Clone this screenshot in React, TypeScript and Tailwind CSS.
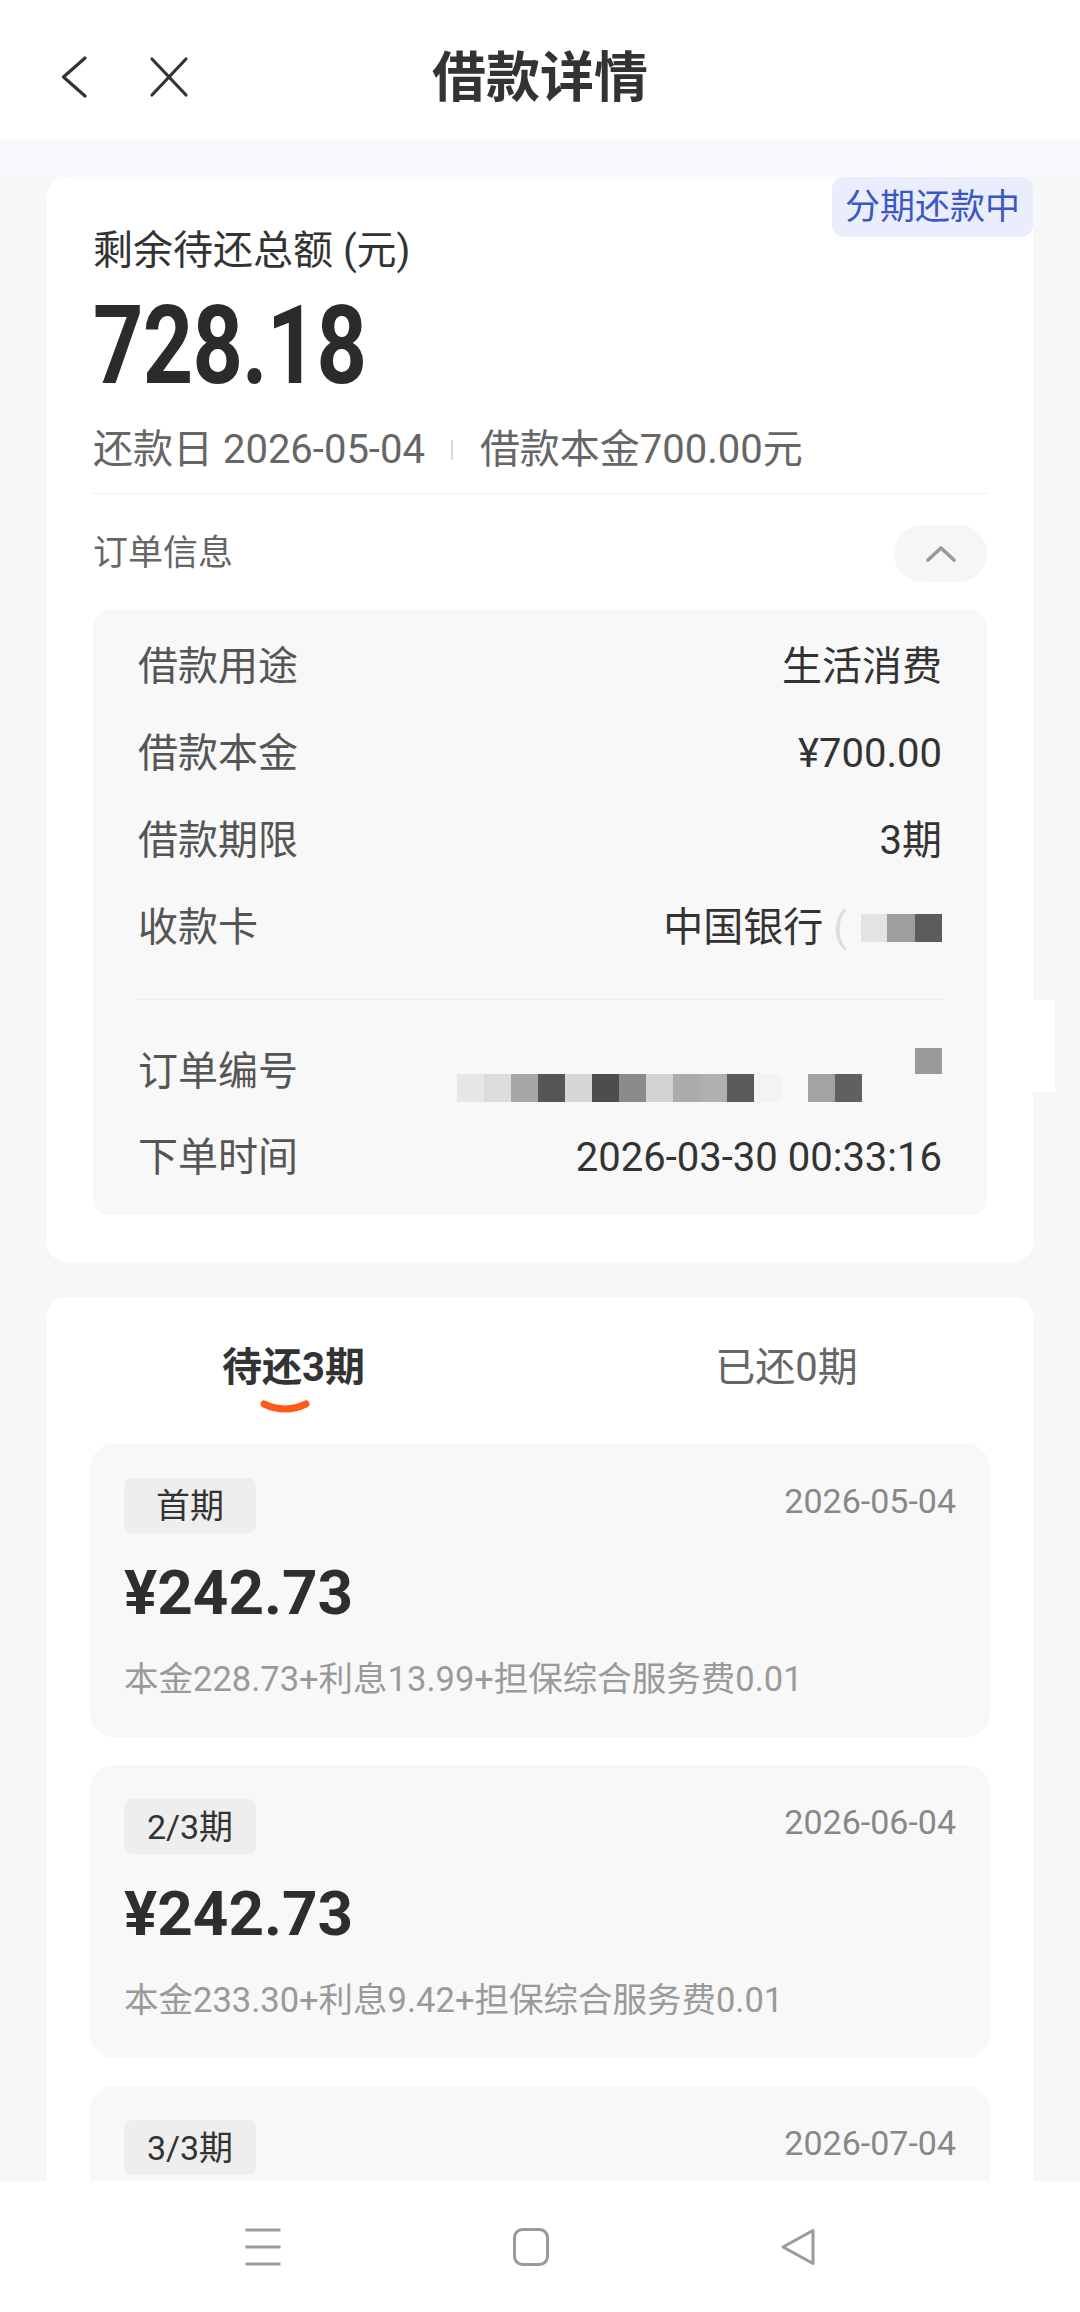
import React from "react";

const orderBlocks: { c: string }[] = [
  { c: "#e6e6e6" },
  { c: "#dcdcdc" },
  { c: "#a6a6a6" },
  { c: "#565656" },
  { c: "#d6d6d6" },
  { c: "#4d4d4d" },
  { c: "#8a8a8a" },
  { c: "#d2d2d2" },
  { c: "#ababab" },
  { c: "#b0b0b0" },
  { c: "#5a5a5a" },
  { c: "#f3f3f3" },
  { c: "transparent" },
  { c: "#a3a3a3" },
  { c: "#606060" },
];

function Row({ label, children }: { label: string; children: React.ReactNode }) {
  return (
    <div className="flex items-center justify-between h-[48px]">
      <span className="text-[40px] leading-[48px] text-[#555]">{label}</span>
      <div className="text-[40px] leading-[48px] text-[#333] flex items-center">{children}</div>
    </div>
  );
}

function Installment({
  tag,
  date,
  amount,
  detail,
}: {
  tag: string;
  date: string;
  amount: string;
  detail: string;
}) {
  return (
    <div className="rounded-[24px] bg-[#f8f8f8] px-[34px] pt-[34px] pb-[38px]">
      <div className="flex items-center justify-between">
        <div className="w-[132px] h-[55px] rounded-[8px] bg-[#eeeeee] flex items-center justify-center text-[34px] leading-none text-[#333]">
          {tag}
        </div>
        <span className="text-[34px] leading-[40px] text-[#888] mb-[10px]">{date}</span>
      </div>
      <div className="mt-[29px] h-[62px] text-[62px] leading-none font-bold text-[#2e2e2e]">{amount}</div>
      <div className="mt-[35px] text-[34.5px] leading-[40px] text-[#9a9a9a]">{detail}</div>
    </div>
  );
}

export default function App() {
  return (
    <div className="w-[1080px] h-[2312px] flex flex-col overflow-hidden bg-[#f7f7f7] font-['Roboto','Noto_Sans_CJK_SC',sans-serif]">
      {/* Header */}
      <header className="h-[140px] shrink-0 bg-white grid grid-cols-[1fr_auto_1fr] items-center pt-[14px]">
        <div className="flex items-center pl-[60px] gap-[61px]">
          <svg width="28" height="42" viewBox="0 0 28 42">
            <path d="M25 2 L3.5 21 L25 40" fill="none" stroke="#333" strokeWidth="3.2" strokeLinecap="round" strokeLinejoin="round" />
          </svg>
          <svg width="40" height="42" viewBox="0 0 40 42">
            <path d="M3 3 L37 39 M37 3 L3 39" fill="none" stroke="#333" strokeWidth="3.2" strokeLinecap="round" />
          </svg>
        </div>
        <h1 className="text-[54px] font-bold text-[#333] leading-none pt-[4px]">借款详情</h1>
        <div />
      </header>

      <div className="h-[37px] shrink-0 bg-[#f8f9fd]" />

      <main className="flex-1 overflow-hidden px-[47px]">
        {/* Card 1 */}
        <section className="relative bg-white rounded-[20px] px-[46px] pt-[50px] pb-[47px]">
          <div className="absolute right-0 top-0 w-[201px] h-[60px] rounded-[12px] bg-[#e9edfc] flex items-center justify-center text-[35px] leading-none text-[#3b57c6]">
            分期还款中
          </div>
          <div className="absolute left-[986px] top-[823px] w-[22px] h-[92px] bg-white" />

          <div className="text-[40px] leading-[48px] text-[#333]">剩余待还总额 (元)</div>
          <div className="mt-[16px] h-[110px] text-[110px] font-bold leading-none text-[#2b2b2b] origin-left scale-x-[0.8] tracking-[-1px]">
            728.18
          </div>
          <div className="mt-[25px] flex items-center text-[40px] leading-[48px] text-[#666]">
            <span>还款日 2026-05-04</span>
            <span className="w-[2px] h-[20px] bg-[#d9d9d9] ml-[26px] mr-[27px]" />
            <span>借款本金700.00元</span>
          </div>
          <div className="mt-[19px] h-[1px] bg-[#eeeeee]" />

          <div className="mt-[31px] flex items-center justify-between h-[57px]">
            <span className="text-[35px] leading-none text-[#666]">订单信息</span>
            <div className="w-[93px] h-[57px] rounded-full bg-[#f6f6f6] flex items-center justify-center">
              <svg width="32" height="18" viewBox="0 0 32 18">
                <path d="M3 15 L16 3 L29 15" fill="none" stroke="#999" strokeWidth="3.6" strokeLinecap="round" strokeLinejoin="round" />
              </svg>
            </div>
          </div>

          <div className="mt-[28px] rounded-[16px] bg-[#f8f8f8] px-[45px] pt-[33px] pb-[33px]">
            <div className="flex flex-col gap-[39px]">
              <Row label="借款用途">生活消费</Row>
              <Row label="借款本金">¥700.00</Row>
              <Row label="借款期限">3期</Row>
              <Row label="收款卡">
                <span>中国银行</span>
                <span className="text-[#dddddd] ml-[10px] mr-[14px]">(</span>
                <span className="w-[26px] h-[28px] bg-[#e3e3e3]" />
                <span className="w-[28px] h-[28px] bg-[#9e9e9e]" />
                <span className="w-[27px] h-[28px] bg-[#5c5c5c]" />
              </Row>
            </div>
            <div className="mt-[47px] mb-[48px] h-[1px] bg-[#eeeeee]" />
            <div className="flex items-start justify-between h-[54px]">
              <span className="text-[40px] leading-[48px] text-[#555]">订单编号</span>
              <div className="flex h-[54px] items-end">
                {orderBlocks.map((b, i) => (
                  <span key={i} className="w-[27px] h-[28px]" style={{ backgroundColor: b.c }} />
                ))}
                <span className="w-[53px]" />
                <span className="w-[27px] h-[26px] bg-[#9a9a9a] self-start" />
              </div>
            </div>
            <div className="mt-[32px]">
              <Row label="下单时间">2026-03-30 00:33:16</Row>
            </div>
          </div>
        </section>

        {/* Card 2 */}
        <section className="mt-[35px] bg-white rounded-[20px] px-[43px] pt-[47px] pb-[40px]">
          <div className="flex -mx-[43px]">
            <div className="flex-1 flex flex-col items-center">
              <span className="text-[40px] leading-[48px] font-bold text-[#333]">待还3期</span>
              <svg className="mt-[8px] mr-[18px]" width="50" height="14" viewBox="0 0 50 14">
                <path d="M4 4 Q25 14 46 4" fill="none" stroke="#ff5a1a" strokeWidth="7" strokeLinecap="round" />
              </svg>
            </div>
            <div className="flex-1 flex flex-col items-center">
              <span className="text-[40px] leading-[48px] text-[#666]">已还0期</span>
            </div>
          </div>

          <div className="mt-[30px] flex flex-col gap-[28px]">
            <Installment tag="首期" date="2026-05-04" amount="¥242.73" detail="本金228.73+利息13.99+担保综合服务费0.01" />
            <Installment tag="2/3期" date="2026-06-04" amount="¥242.73" detail="本金233.30+利息9.42+担保综合服务费0.01" />
            <Installment tag="3/3期" date="2026-07-04" amount="¥242.72" detail="本金237.97+利息4.74+担保综合服务费0.01" />
          </div>
        </section>
      </main>

      {/* Bottom navigation */}
      <nav className="h-[131px] shrink-0 bg-white flex items-center pl-[244px] gap-[231px]">
        <svg width="38" height="38" viewBox="0 0 38 38">
          <path d="M1.5 2 H36.5 M1.5 19 H36.5 M1.5 36 H36.5" stroke="#9a9a9a" strokeWidth="3" />
        </svg>
        <svg width="36" height="38" viewBox="0 0 36 38">
          <rect x="1.5" y="1.5" width="33" height="35" rx="8" fill="none" stroke="#9a9a9a" strokeWidth="3" />
        </svg>
        <svg width="36" height="38" viewBox="0 0 36 38">
          <path d="M33 2.5 L3 19 L33 35.5 Z" fill="none" stroke="#9a9a9a" strokeWidth="3" strokeLinejoin="round" />
        </svg>
      </nav>
    </div>
  );
}
